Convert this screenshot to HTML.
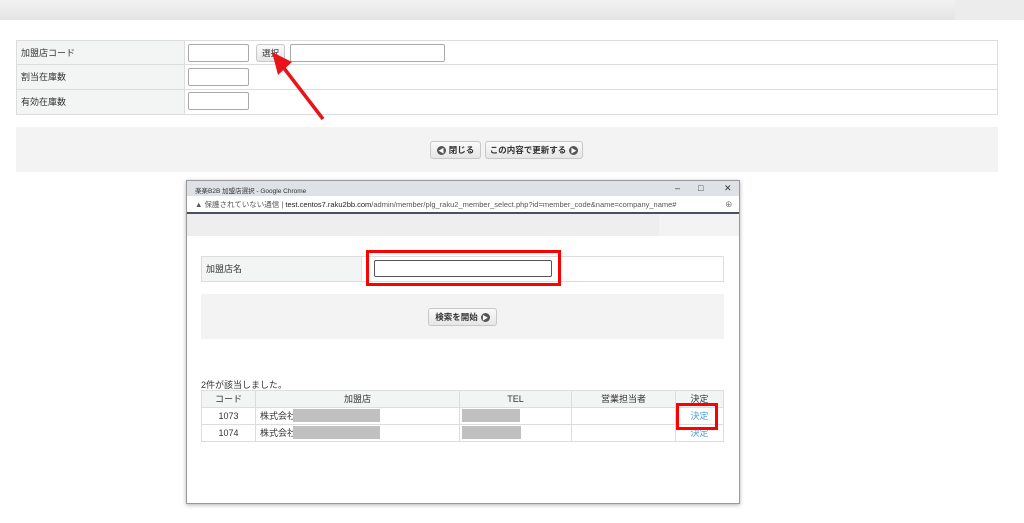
<!DOCTYPE html>
<html><head><meta charset="utf-8"><style>
*{margin:0;padding:0;box-sizing:border-box}
body{width:1024px;height:523px;background:#fff;position:relative;overflow:hidden;font-family:"Liberation Sans","Noto Sans CJK JP",sans-serif;font-size:9px;color:#333}
.a{position:absolute}
.inp{position:absolute;background:#fff;border:1px solid #aaa;border-radius:2px}
.btn{position:absolute;background:linear-gradient(#fafafa,#e6e6e6);border:1px solid #c8c8c8;border-radius:3px;font-weight:bold;font-size:8.5px;display:flex;align-items:center;justify-content:center;gap:3px;color:#333}
.ic{width:9px;height:9px;border-radius:50%;background:#555;color:#fff;font-size:6px;display:inline-flex;align-items:center;justify-content:center}
table{border-collapse:collapse;position:absolute}
td{border:1px solid #ddd;font-size:9px;line-height:10px;vertical-align:middle}
</style></head><body>
<div class="a" style="left:0;top:0;width:1024px;height:20px;background:linear-gradient(#f2f2f2,#e4e4e4)"></div>
<div class="a" style="left:955px;top:0;width:69px;height:20px;background:#ececec"></div>

<table style="left:16px;top:40px;width:982px">
<tr style="height:24px"><td style="width:168px;background:#f3f4f4;padding-left:4px">加盟店コード</td><td></td></tr>
<tr style="height:25px"><td style="background:#f3f4f4;padding-left:4px">割当在庫数</td><td></td></tr>
<tr style="height:25px"><td style="background:#f3f4f4;padding-left:4px">有効在庫数</td><td></td></tr>
</table>
<div class="inp" style="left:188px;top:44px;width:61px;height:18px"></div>
<div class="btn" style="left:256px;top:44px;width:29px;height:18px;font-weight:normal">選択</div>
<div class="inp" style="left:290px;top:44px;width:155px;height:18px"></div>
<div class="inp" style="left:188px;top:68px;width:61px;height:18px"></div>
<div class="inp" style="left:188px;top:92px;width:61px;height:18px"></div>
<svg class="a" style="left:260px;top:45px" width="70" height="80"><line x1="63" y1="74" x2="20" y2="18" stroke="#e8141a" stroke-width="3.5"/><polygon points="12,7 32,17 18,30" fill="#e8141a"/></svg>

<div class="a" style="left:16px;top:127px;width:982px;height:45px;background:#f3f3f3"></div>
<div class="btn" style="left:430px;top:141px;width:51px;height:18px"><span class="ic">◀</span>閉じる</div>
<div class="btn" style="left:485px;top:141px;width:98px;height:18px">この内容で更新する<span class="ic">▶</span></div>

<div class="a" style="left:186px;top:180px;width:554px;height:324px;border:1px solid #999;background:#fff;box-shadow:0 1px 4px rgba(0,0,0,.3)"></div>
<div class="a" style="left:187px;top:181px;width:552px;height:15px;background:#dee1e6;font-size:6.5px;padding:4px 0 0 8px;color:#333">楽楽B2B 加盟店選択 - Google Chrome
<span class="a" style="left:488px;top:2px;font-size:9px">–</span><span class="a" style="left:511px;top:2px;font-size:9px">□</span><span class="a" style="left:537px;top:2px;font-size:9px">✕</span></div>
<div class="a" style="left:187px;top:196px;width:552px;height:16px;background:#fff;font-size:7.5px;padding:3px 0 0 8px;color:#555;white-space:nowrap">▲ 保護されていない通信 | <span style="color:#222">test.centos7.raku2bb.com</span>/admin/member/plg_raku2_member_select.php?id=member_code&amp;name=company_name#<span style="position:absolute;left:538px">⊕</span></div>
<div class="a" style="left:187px;top:212px;width:552px;height:2px;background:#4a5060"></div>
<div class="a" style="left:187px;top:214px;width:552px;height:22px;background:#eee"></div>
<div class="a" style="left:659px;top:214px;width:80px;height:22px;background:#f3f3f3"></div>

<table style="left:201px;top:256px;width:523px">
<tr style="height:25px"><td style="width:160px;background:#f3f4f4;padding-left:4px">加盟店名</td><td style="background:#fff"></td></tr></table>
<div class="a" style="left:366px;top:250px;width:195px;height:36px;border:3px solid #f00"></div>
<div class="inp" style="left:374px;top:260px;width:178px;height:17px;border:1px solid #555"></div>

<div class="a" style="left:201px;top:294px;width:523px;height:45px;background:#f3f3f3"></div>
<div class="btn" style="left:428px;top:308px;width:69px;height:18px">検索を開始<span class="ic">▶</span></div>

<div class="a" style="left:201px;top:378px">2件が該当しました。</div>
<table style="left:201px;top:390px;width:523px;text-align:center">
<tr style="height:17px;background:#f3f4f4"><td style="width:54px">コード</td><td style="width:204px">加盟店</td><td style="width:112px">TEL</td><td style="width:104px">営業担当者</td><td>決定</td></tr>
<tr style="height:17px"><td>1073</td><td style="text-align:left;padding-left:4px">株式会社</td><td></td><td></td><td style="color:#4a9bd6">決定</td></tr>
<tr style="height:17px"><td>1074</td><td style="text-align:left;padding-left:4px">株式会社</td><td></td><td></td><td style="color:#4a9bd6">決定</td></tr>
</table>
<div class="a" style="left:293px;top:409px;width:87px;height:13px;background:#c0c0c0"></div>
<div class="a" style="left:293px;top:426px;width:87px;height:13px;background:#c0c0c0"></div>
<div class="a" style="left:462px;top:409px;width:58px;height:13px;background:#c0c0c0"></div>
<div class="a" style="left:462px;top:426px;width:59px;height:13px;background:#c0c0c0"></div>
<div class="a" style="left:676px;top:403px;width:42px;height:27px;border:3px solid #f00"></div>
</body></html>
